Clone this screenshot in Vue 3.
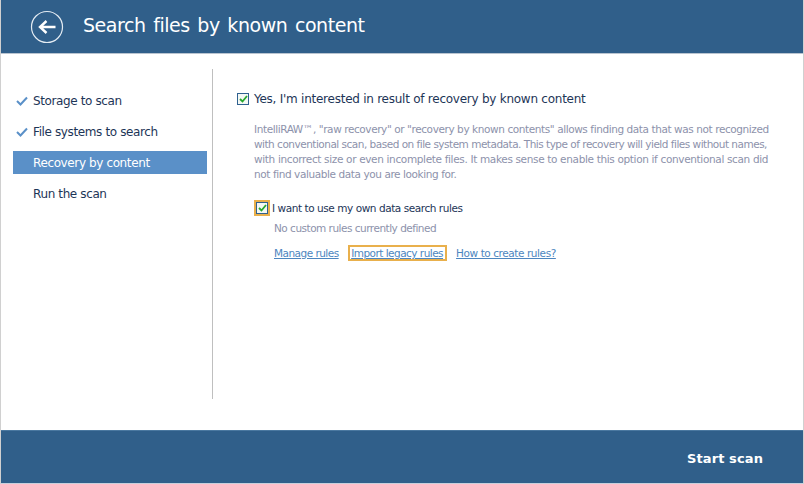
<template>
  <div class="win">
    <header class="head">
      <svg class="back" width="34" height="34" viewBox="0 0 34 34">
        <circle cx="17" cy="17" r="15.5" fill="none" stroke="#e4ecf3" stroke-width="1.2" />
        <path d="M25.5 17H10.5M16.5 11l-6.5 6 6.5 6" fill="none" stroke="#fff" stroke-width="2.4" />
      </svg>
      <h1 class="title">Search files by known content</h1>
    </header>
    <main class="body">
      <nav class="side">
        <div v-for="s in steps" :key="s.t" class="step" :class="{ on: s.on }">
          <svg v-if="s.done" class="tick" width="12" height="10" viewBox="0 0 12 10">
            <path d="M1 5l3.5 3.5L11 1.5" fill="none" stroke="#5a90c8" stroke-width="2" />
          </svg>
          <span>{{ s.t }}</span>
        </div>
      </nav>
      <section class="content">
        <label class="main-check">
          <span class="box"><svg width="9" height="8" viewBox="0 0 9 8"><path d="M1 4l2.5 2.5L8 1" fill="none" stroke="#27a82d" stroke-width="1.8" /></svg></span>
          <span>Yes, I'm interested in result of recovery by known content</span>
        </label>
        <p class="desc">
          <span>IntelliRAW™, "raw recovery" or "recovery by known contents" allows finding data that was not recognized</span>
          <span class="tight">with conventional scan, based on file system metadata. This type of recovery will yield files without names,</span>
          <span class="loose">with incorrect size or even incomplete files. It makes sense to enable this option if conventional scan did</span>
          <span>not find valuable data you are looking for.</span>
        </p>
        <label class="sub-check">
          <span class="focus"><span class="box"><svg width="9" height="8" viewBox="0 0 9 8"><path d="M1 4l2.5 2.5L8 1" fill="none" stroke="#27a82d" stroke-width="1.8" /></svg></span></span>
          <span>I want to use my own data search rules</span>
        </label>
        <div class="none">No custom rules currently defined</div>
        <div class="links">
          <a>Manage rules</a>
          <a class="active">Import legacy rules</a>
          <a class="last">How to create rules?</a>
        </div>
      </section>
    </main>
    <footer class="foot"><span class="start">Start scan</span></footer>
  </div>
</template>

<script setup>
const steps = [
  { t: 'Storage to scan', done: true },
  { t: 'File systems to search', done: true },
  { t: 'Recovery by content', on: true },
  { t: 'Run the scan' },
]
</script>

<style>
html, body { margin: 0; background: #fff; }
</style>

<style scoped>
.win {
  width: 804px; height: 484px; box-sizing: border-box; overflow: hidden;
  display: flex; flex-direction: column; background: #fff;
  border-left: 1px solid #d0d0d0; border-right: 1px solid #d0d0d0; border-bottom: 1px solid #c8d0dc;
  font-family: "DejaVu Sans", sans-serif; font-size: 12px; color: #1d3557;
}
.head { height: 53px; flex: none; background: #305f8a; border-bottom: 1px solid #b9c4d0; display: flex; align-items: center; padding-left: 29px; }
.back { flex: none; margin-top: 1px; }
.title { margin: 0 0 4px 19px; font-size: 19px; font-weight: 400; color: #fff; letter-spacing: -0.45px; word-spacing: 2px; }
.body { flex: 1; display: flex; padding-top: 15px; min-height: 0; }
.side { width: 194px; margin-left: 12px; padding-top: 20px; flex: none; }
.step { height: 23px; margin-bottom: 8px; display: flex; align-items: center; padding-left: 20px; position: relative; letter-spacing: -0.38px; color: #1d3557; }
.step.on { background: #5a90c8; color: #fff; }
.tick { position: absolute; left: 3px; top: 7px; }
.content { margin-left: 5px; height: 309px; border-left: 1px solid #bfbfbf; padding: 21px 0 0 24px; }
.main-check { display: flex; align-items: center; gap: 5px; height: 18px; letter-spacing: -0.25px; color: #1d3557; }
.box { width: 10px; height: 10px; border: 1px solid #2f6190; display: flex; align-items: center; justify-content: center; background: #f4f8f4; flex: none; }
.desc { margin: 14px 0 0 17px; display: flex; flex-direction: column; font-size: 10.5px; line-height: 15px; color: #8d92ab; letter-spacing: -0.41px; white-space: nowrap; }
.desc .tight { letter-spacing: -0.5px; }
.desc .loose { letter-spacing: -0.345px; }
.sub-check { display: flex; align-items: center; gap: 2px; margin: 18px 0 0 17px; font-size: 10.5px; letter-spacing: -0.44px; color: #1d3557; height: 16px; }
.focus { width: 12px; height: 12px; border: 2px solid #e9b04c; display: flex; align-items: center; justify-content: center; flex: none; }
.none { margin: 5px 0 0 37px; font-size: 10.5px; letter-spacing: -0.5px; color: #8d92ab; height: 15px; line-height: 15px; }
.links { display: flex; align-items: center; margin: 9px 0 0 37px; gap: 9px; font-size: 10.5px; letter-spacing: -0.52px; }
.links a { color: #4d86c0; text-decoration: underline; }
.links .last { letter-spacing: -0.42px; }
.links .active { border: 2px solid #e9b04c; padding: 0 2px 0 1.5px; height: 12px; line-height: 12px; }
.foot { flex: none; background: #305f8a; border-top: 1px solid #4a78a0; display: flex; align-items: center; justify-content: flex-end; padding: 2px 40px 0 0; height: 50px; }
.start { font-size: 13px; font-weight: 700; color: #fff; letter-spacing: 0.1px; }
</style>
